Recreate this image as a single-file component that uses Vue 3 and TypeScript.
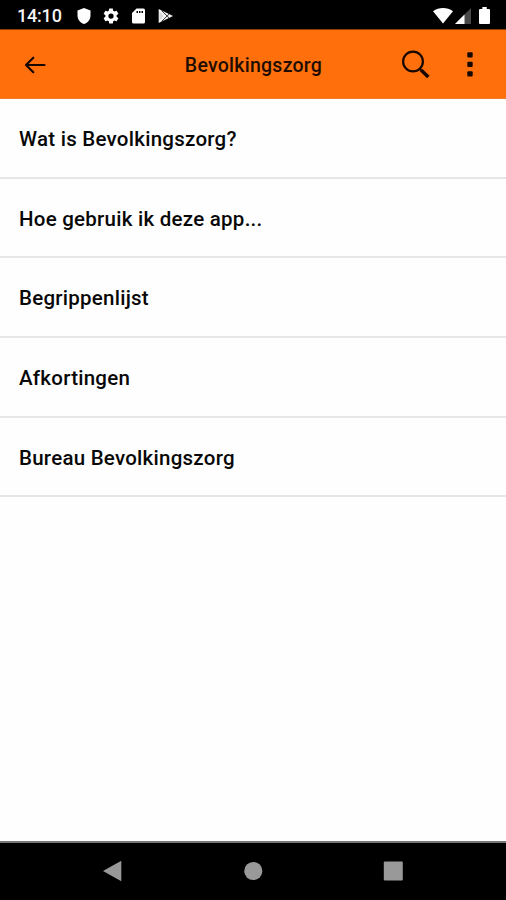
<script setup lang="ts">
interface MenuItem {
  id: string
  label: string
}

const title = 'Bevolkingszorg'
const items: MenuItem[] = [
  { id: 'about', label: 'Wat is Bevolkingszorg?' },
  { id: 'usage', label: 'Hoe gebruik ik deze app...' },
  { id: 'terms', label: 'Begrippenlijst' },
  { id: 'abbreviations', label: 'Afkortingen' },
  { id: 'office', label: 'Bureau Bevolkingszorg' },
]
</script>

<template>
  <div class="screen">
    <div class="status-bar">
      <div class="status-left">
        <span class="clock">14:10</span>
        <svg class="shield" width="14" height="16" viewBox="0 0 14 16"><path d="M7 0 13.500 2.400V7.500C13.500 11.500 11 14.800 7 16 3 14.800 .5 11.500 .5 7.500V2.400Z" fill="#fff" /></svg>
        <svg class="gear" width="18" height="18" viewBox="0 0 24 24"><path fill="#fff" d="M19.430 12.980c.04-.32.07-.64.07-.98s-.03-.66-.07-.98l2.110-1.650a.5.5 0 0 0 .12-.64l-2-3.460a.5.5 0 0 0-.61-.22l-2.490 1a7.300 7.300 0 0 0-1.690-.98l-.38-2.650A.49.49 0 0 0 14 2h-4a.49.49 0 0 0-.49.420l-.38 2.650c-.61.250-1.170.590-1.690.980l-2.490-1a.5.5 0 0 0-.61.220l-2 3.460a.5.5 0 0 0 .12.640l2.110 1.650c-.04.320-.07.650-.07.980s.03.660.07.980l-2.110 1.650a.5.5 0 0 0-.12.640l2 3.460c.12.220.390.300.610.220l2.490-1c.52.400 1.080.730 1.690.980l.38 2.650c.03.240.240.420.490.420h4c.25 0 .46-.18.490-.42l.38-2.650a7.300 7.300 0 0 0 1.690-.98l2.490 1c.23.090.49 0 .61-.22l2-3.460a.5.5 0 0 0-.12-.64zM12 15.500a3.500 3.500 0 1 1 0-7 3.500 3.500 0 0 1 0 7z" /></svg>
        <svg class="sd-card" width="13" height="16" viewBox="0 0 13 16"><path fill="#fff" fill-rule="evenodd" d="M4.500.5H11.500Q13 .5 13 2V14Q13 15.500 11.500 15.500H1.500Q0 15.500 0 14V5ZM4.500 3V5H6V3ZM7 3V5H8.500V3ZM9.500 3V5H11V3Z" /></svg>
        <svg class="play" width="16" height="16" viewBox="0 0 16 16"><path d="M.7 1 15 8 .7 15Z" fill="#f5f5f5" /><path d="m3.500 2.500 7.500 7.300M3.500 13.500l7.500-7.300" stroke="#333" stroke-width="1" /><path d="M1.500 3.500 5.800 8 1.500 12.500Z" fill="#d8d8d8" /></svg>
      </div>
      <div class="status-right">
        <svg width="20" height="16" viewBox="0 0 20 16"><path d="M0 3.300C6-1 14-1 20 3.300L10 15.500Z" fill="#fff" /></svg>
        <svg class="signal" width="16" height="16" viewBox="0 0 16 16"><path d="M0 16 16 0V16Z" fill="#484848" /><path d="M0 16 9.500 6.500V16Z" fill="#fff" /></svg>
        <svg class="battery" width="11" height="17" viewBox="0 0 11 17"><path d="M3.300 0H7.700V2H10Q11 2 11 3V16Q11 17 10 17H1Q0 17 0 16V3Q0 2 1 2H3.300Z" fill="#fff" /></svg>
      </div>
    </div>

    <header class="app-bar">
      <button class="icon-button back" aria-label="Terug">
        <svg width="22" height="18" viewBox="0 0 22 18"><path d="M9.300 1.700 2 9l7.300 7.300M2 9H20.500" fill="none" stroke="#160800" stroke-width="2.200" stroke-linecap="round" stroke-linejoin="round" /></svg>
      </button>
      <h1>{{ title }}</h1>
      <div class="actions">
        <button class="icon-button" aria-label="Zoeken">
          <svg width="30" height="30" viewBox="0 0 30 30"><circle cx="12" cy="11.500" r="9.900" fill="none" stroke="#160800" stroke-width="2.200" /><path d="m18.700 18.800 1.300 1.300" stroke="#160800" stroke-width="2.500" /><path d="m20 20 7.300 7" stroke="#160800" stroke-width="3.500" /></svg>
        </button>
        <button class="icon-button more" aria-label="Meer">
          <svg width="6" height="26" viewBox="0 0 6 26"><g fill="#160800"><rect x=".3" y=".2" width="5.400" height="5.200" rx="1" /><rect x=".3" y="9.700" width="5.400" height="5.200" rx="1" /><rect x=".3" y="19.200" width="5.400" height="5.200" rx="1" /></g></svg>
        </button>
      </div>
    </header>

    <ul class="menu">
      <li v-for="item in items" :key="item.id">{{ item.label }}</li>
    </ul>

    <nav class="nav-bar">
      <svg width="20" height="22" viewBox="0 0 20 22"><path d="M0 11 18.300.8V21.200Z" fill="#999" /></svg>
      <svg width="20" height="20" viewBox="0 0 20 20"><circle cx="10.300" cy="10" r="9.100" fill="#999" /></svg>
      <svg width="20" height="20" viewBox="0 0 20 20"><rect x=".8" y=".5" width="19" height="19" rx="1" fill="#999" /></svg>
    </nav>
  </div>
</template>

<style>
body {
  margin: 0;
  background: #fff;
}
</style>

<style scoped>
.screen {
  display: flex;
  flex-direction: column;
  width: 506px;
  height: 900px;
  overflow: hidden;
  background: #fefefe;
  color: #080808;
  font-family: Roboto, "Liberation Sans", sans-serif;
}

svg {
  display: block;
  flex: none;
}

.status-bar {
  box-sizing: border-box;
  display: flex;
  justify-content: space-between;
  height: 30px;
  padding: 0 16px 0 17px;
  border-bottom: 1px solid #8c3a05;
  background: #000;
}

.status-left,
.status-right {
  display: flex;
  align-items: center;
  height: 31px;
}

.clock {
  width: 60px;
  color: #f4f4f4;
  font-size: 18px;
  font-weight: 500;
  letter-spacing: -0.2px;
  line-height: 31px;
}

.gear {
  margin-left: 11px;
}

.sd-card {
  margin-left: 12px;
}

.play {
  margin-left: 13px;
}

.signal {
  margin-left: 2px;
}

.battery {
  margin-left: 8px;
}

.app-bar {
  box-sizing: border-box;
  display: grid;
  grid-template-columns: 1fr auto 1fr;
  align-items: center;
  height: 69px;
  padding: 1px 33px 0 24px;
  border-bottom: 1px solid #f17b2c;
  background: #ff700d;
}

.icon-button {
  padding: 0;
  border: 0;
  background: none;
}

.app-bar h1 {
  margin: 3px 0 0;
  padding-left: 10px;
  color: #210d00;
  font-size: 19.5px;
  font-weight: 500;
  letter-spacing: 0.25px;
  line-height: 24px;
}

.actions {
  display: flex;
  align-items: center;
  justify-content: flex-end;
  gap: 36px;
}

.menu {
  flex: 1;
  margin: 0;
  padding: 0;
  list-style: none;
}

.menu li {
  box-sizing: border-box;
  height: 79.7px;
  padding-left: 19px;
  border-bottom: 2px solid #e6e6e6;
  font-size: 20.5px;
  font-weight: 500;
  letter-spacing: 0.25px;
  line-height: 81px;
}

.nav-bar {
  box-sizing: border-box;
  display: flex;
  align-items: center;
  justify-content: center;
  gap: 120px;
  height: 59px;
  padding-bottom: 2px;
  border-top: 2px solid #777;
  background: #000;
}
</style>
